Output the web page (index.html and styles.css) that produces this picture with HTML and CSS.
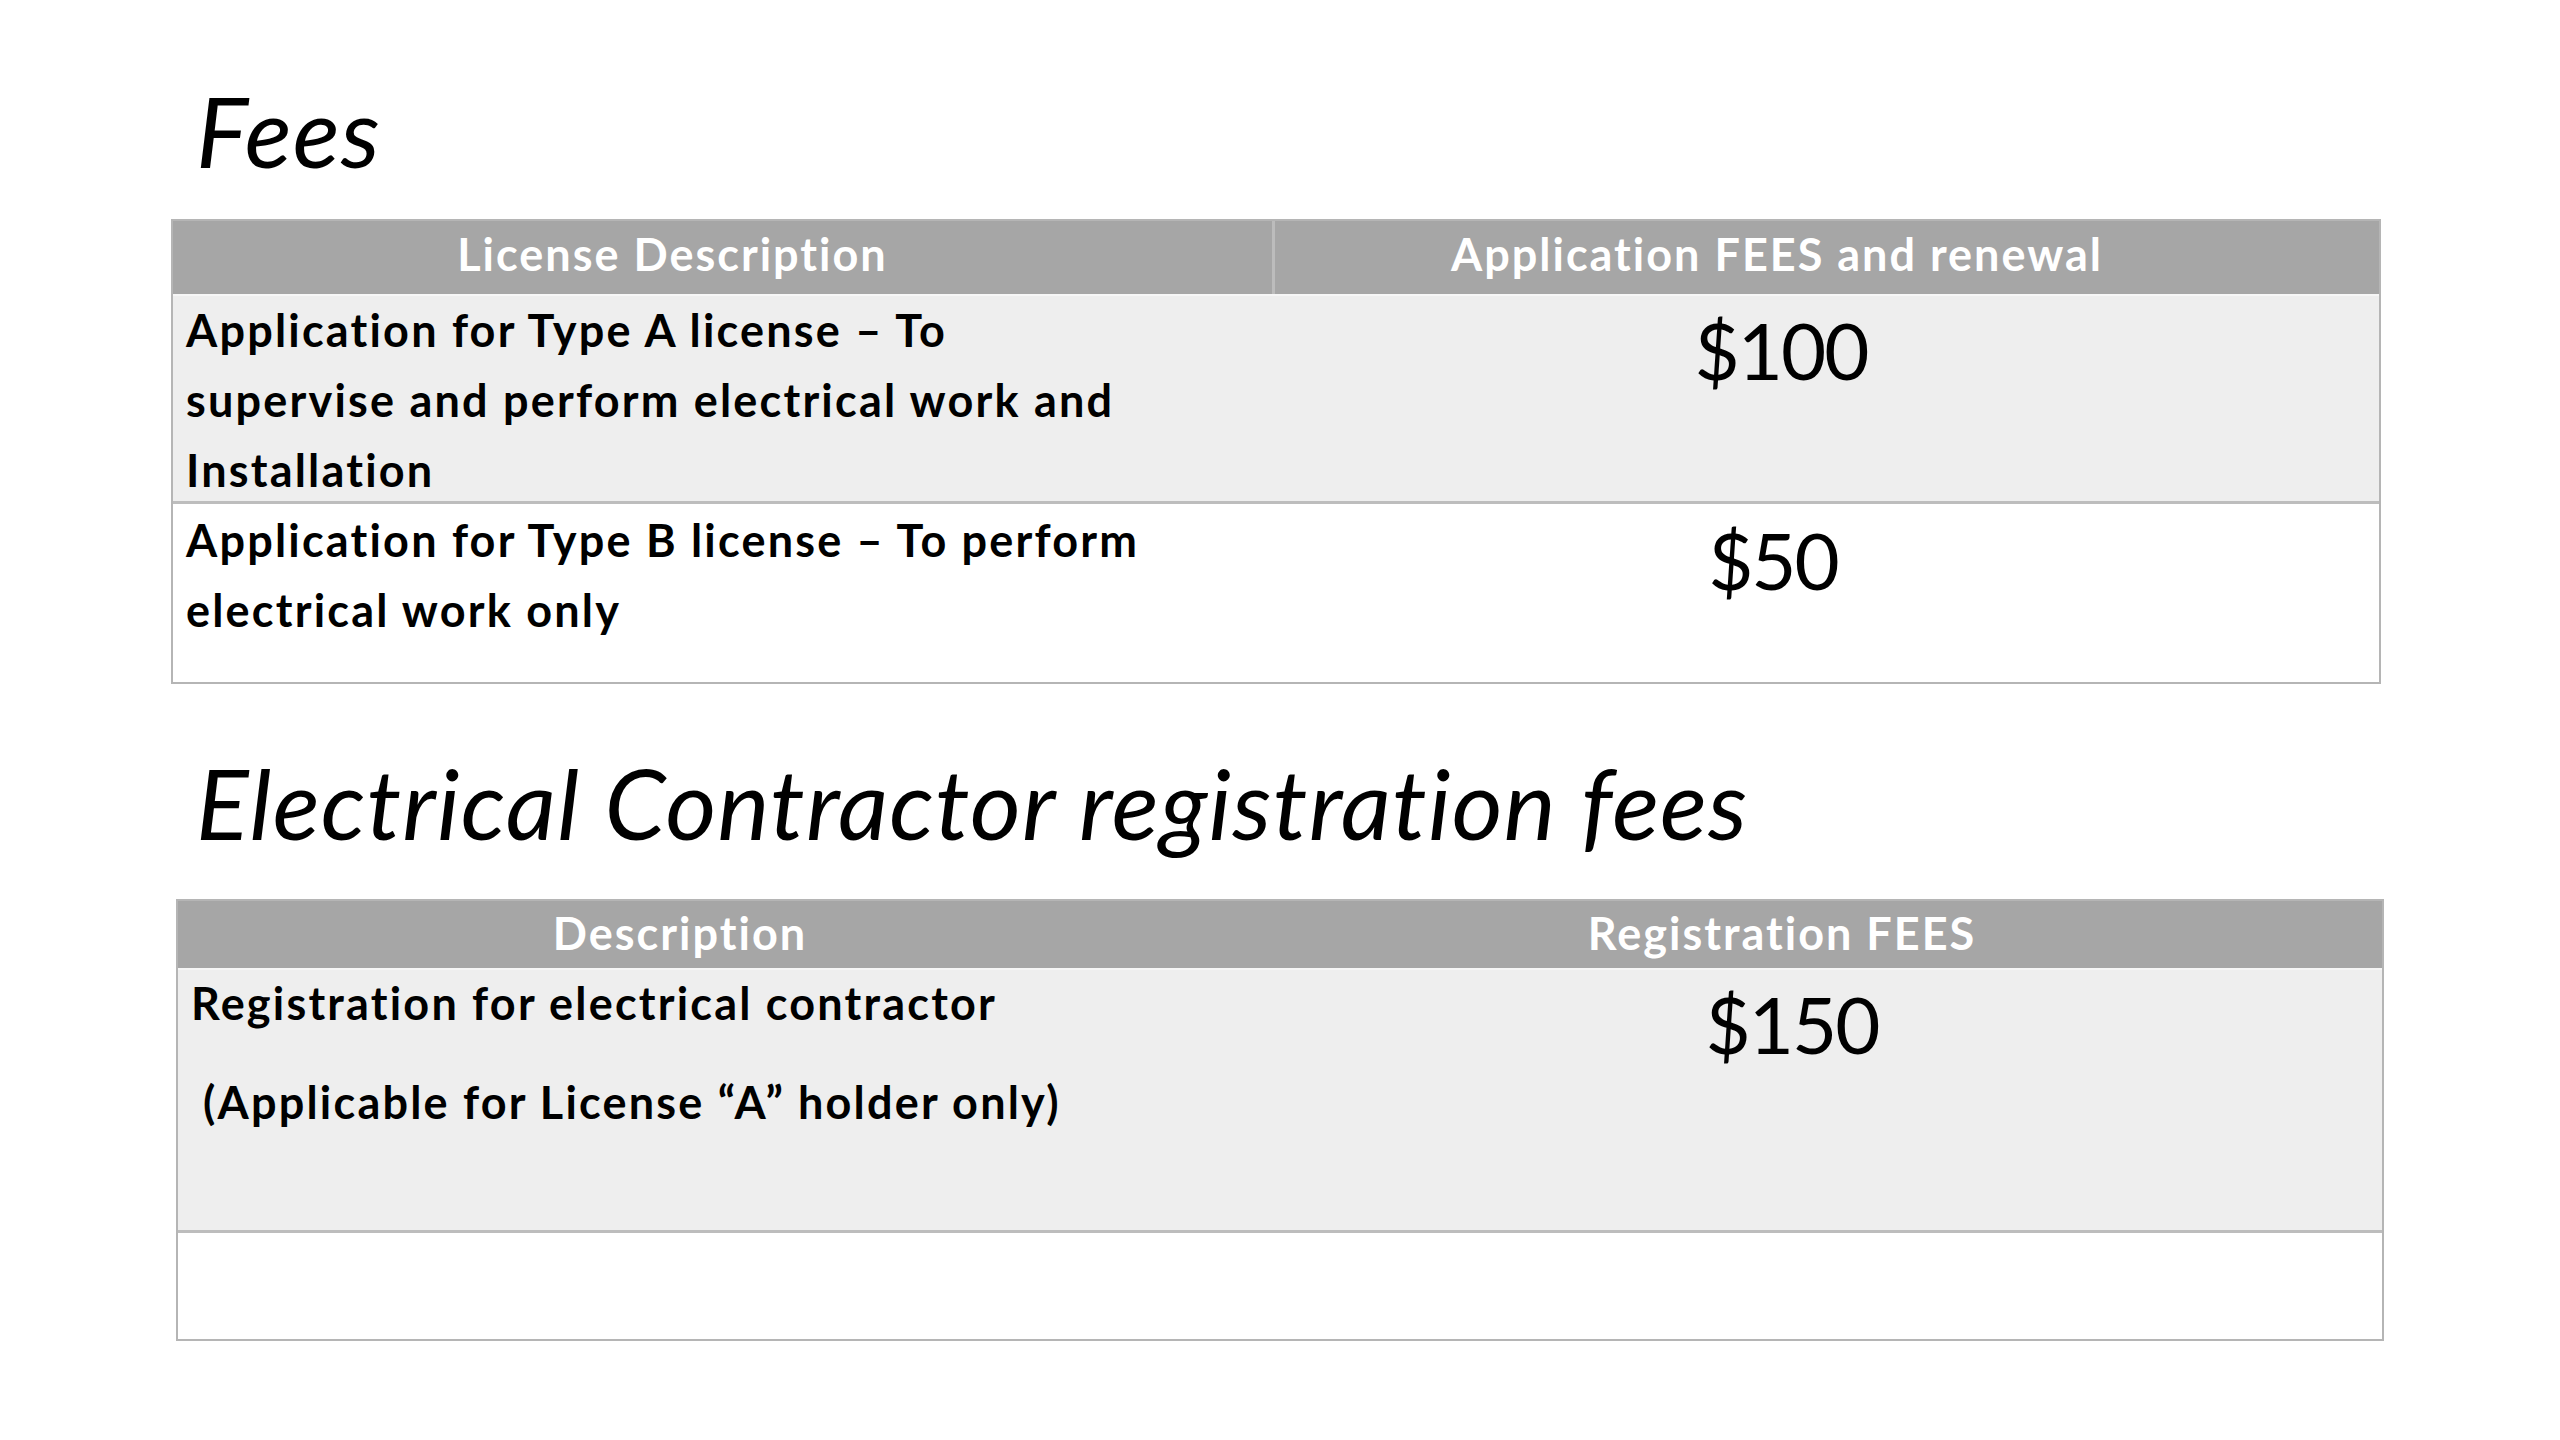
FILE: index.html
```html
<!DOCTYPE html>
<html lang="en">
<head>
<meta charset="utf-8">
<title>Fees</title>
<link rel="stylesheet" href="styles.css">
</head>
<body>
<main class="slide">
  <h1 class="title">Fees</h1>
  <section class="table table-license">
    <div class="row head">
      <div class="cell hcell divider">License Description</div>
      <div class="cell hcell">Application FEES and renewal</div>
    </div>
    <div class="row shaded r1">
      <div class="cell desc">Application for Type A license – To<br>supervise and perform electrical work and<br>Installation</div>
      <div class="cell price">$100</div>
    </div>
    <div class="row plain r2">
      <div class="cell desc">Application for Type B license – To perform<br>electrical work only</div>
      <div class="cell price price-50">$50</div>
    </div>
  </section>

  <h1 class="title title-2">Electrical Contractor registration fees</h1>
  <section class="table table-reg">
    <div class="row head head-2">
      <div class="cell hcell">Description</div>
      <div class="cell hcell">Registration FEES</div>
    </div>
    <div class="row shaded r3">
      <div class="cell desc desc-reg">
        <p class="line">Registration for electrical contractor</p>
        <p class="line note">(Applicable for License “A” holder only)</p>
      </div>
      <div class="cell price price-150">$150</div>
    </div>
    <div class="row plain r4">
      <div class="cell"></div>
      <div class="cell"></div>
    </div>
  </section>
</main>
</body>
</html>
```

FILE: styles.css
```css
html, body {
  margin: 0;
  padding: 0;
  background: #ffffff;
}

.slide {
  width: 2560px;
  height: 1440px;
  box-sizing: border-box;
  padding: 71px 0 0 171px;
  font-family: Lato, "Open Sans", "Liberation Sans", sans-serif;
  color: #000;
}

.title {
  margin: 0 0 0 25px;
  font-size: 98px;
  line-height: 118px;
  height: 118px;
  font-style: italic;
  font-weight: 400;
  letter-spacing: 1.2px;
}

.title-2 {
  margin-top: 59px;
}

.table {
  width: 2210px;
  box-sizing: border-box;
  border: 2px solid #b5b5b5;
  margin-top: 30px;
}

.table-reg {
  width: 2208px;
  margin-left: 5px;
  margin-top: 38px;
}

.row {
  display: grid;
  grid-template-columns: 1102px 1fr;
}

.table-reg .row {
  grid-template-columns: 1104px 1fr;
}

.head {
  background: #a6a6a6;
  height: 73px;
}

.head-2 {
  height: 67px;
}

.shaded {
  background: #eeeeee;
  box-shadow: inset 0 2px 0 #f6f6f6;
}

.plain {
  background: #ffffff;
}

.r1 { height: 207px; }
.r2 { height: 178px; border-top: 3px solid #bdbdbd; }
.r3 { height: 262px; }
.r4 { height: 106px; border-top: 3px solid #bdbdbd; }

.cell {
  box-sizing: border-box;
}

.hcell {
  color: #ffffff;
  font-weight: 700;
  font-size: 45px;
  line-height: 53px;
  letter-spacing: 2px;
  text-align: center;
  padding: 7px 100px 0 0;
}

.head-2 .hcell {
  padding-top: 6px;
}

.divider {
  border-right: 3px solid #bcbcbc;
}

.desc {
  font-weight: 700;
  font-size: 45px;
  line-height: 70px;
  letter-spacing: 2.2px;
  padding: 1px 0 0 13px;
}

.desc-reg {
  padding-top: 4px;
}

.line {
  margin: 0;
  line-height: 62px;
}

.note {
  margin-top: 37px;
  margin-left: 12px;
}

.price {
  font-size: 78px;
  line-height: 94px;
  letter-spacing: -2px;
  text-align: center;
  padding: 9px 92px 0 0;
}

.price-50 {
  padding-right: 108px;
}

.price-150 {
  padding-right: 80px;
}
```
